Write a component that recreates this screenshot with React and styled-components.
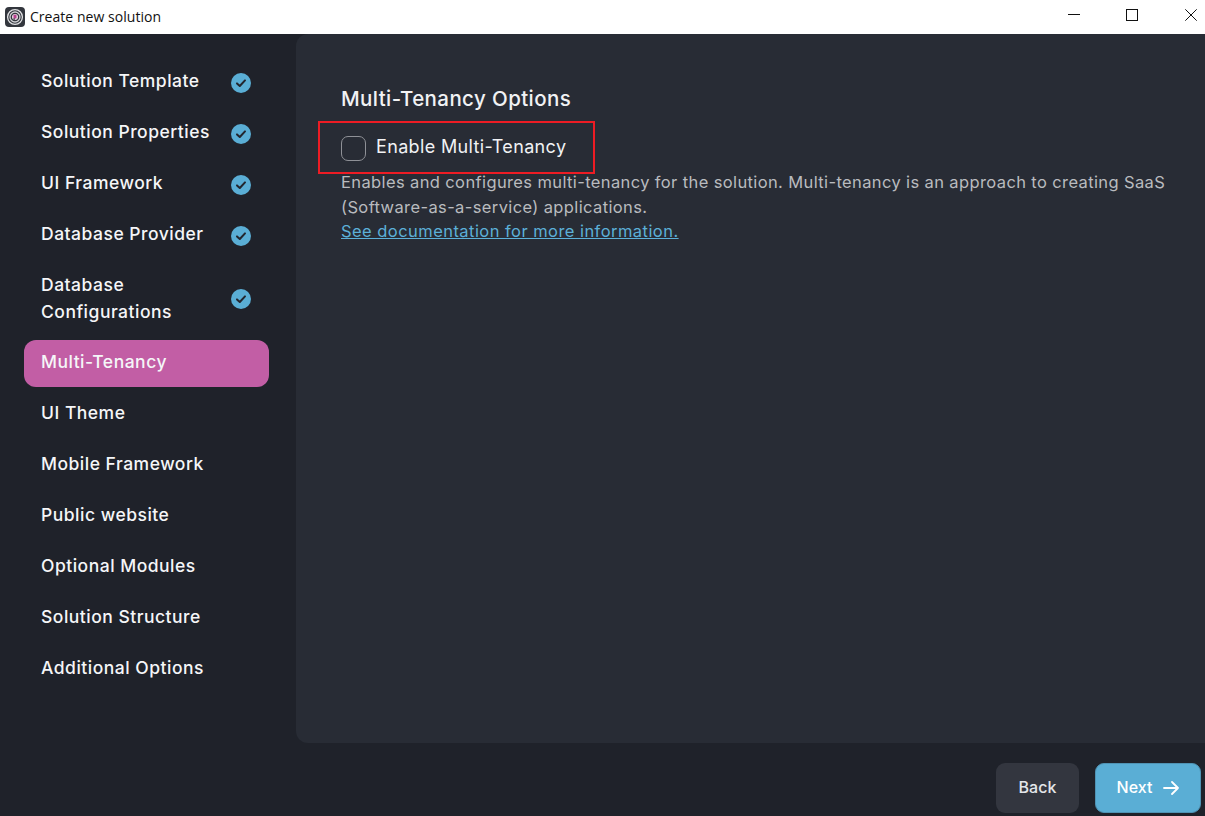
import React from "react";
import styled, { createGlobalStyle } from "styled-components";

const Global = createGlobalStyle`
  html, body { margin: 0; padding: 0; height: 100%; overflow: hidden; }
  body { background: #1f222a; font-family: "Inter", "Liberation Sans", sans-serif; }
  * { box-sizing: border-box; }
`;

const Shell = styled.div`
  width: 1205px;
  height: 816px;
  display: flex;
  flex-direction: column;
  background: #1f222a;
`;

const TitleBar = styled.header`
  height: 34px;
  flex: none;
  background: #fff;
  display: flex;
  align-items: center;
  padding: 0 8px 0 5px;
`;

const Logo = styled.svg`
  width: 20px;
  height: 20px;
  flex: none;
`;

const WindowTitle = styled.span`
  margin-left: 5px;
  font: 400 14px/20px "Open Sans", sans-serif;
  color: #111;
  letter-spacing: 0.04px;
  flex: 1;
`;

const WinButtons = styled.div`
  display: flex;
  align-items: center;
  gap: 46px;
  margin-top: -4px;
  & > :last-child {
    margin-left: 1px;
  }
`;

const WinIcon = styled.svg`
  width: 12px;
  height: 12px;
  display: block;
`;

const Body = styled.div`
  flex: 1;
  display: flex;
  min-height: 0;
`;

const Sidebar = styled.nav`
  width: 296px;
  flex: none;
  padding: 25px 27px 0 24px;
  display: flex;
  flex-direction: column;
  gap: 4px;
`;

const Step = styled.div`
  display: flex;
  align-items: center;
  justify-content: space-between;
  padding: 8px 18px 12px 17px;
  margin-bottom: ${(p) => (p.$tall ? "-2px" : "0")};
  border-radius: 12px;
  background: ${(p) => (p.$active ? "#c25ea5" : "transparent")};
  color: #f5f6f8;
  font-size: 17.5px;
  line-height: 27.1px;
  font-weight: 500;
  letter-spacing: 0.5px;
`;

const StepLabel = styled.span`
  max-width: 175px;
`;

const CheckBadge = styled.svg`
  width: 20px;
  height: 20px;
  flex: none;
  margin-top: ${(p) => (p.$tall ? "2px" : "5px")};
`;

const Main = styled.div`
  flex: 1;
  display: flex;
  flex-direction: column;
  min-width: 0;
`;

const Panel = styled.section`
  height: 709px;
  flex: none;
  background: #282c35;
  border-radius: 12px 0 0 12px;
  padding: 51px 30px 0 45px;
`;

const Heading = styled.h2`
  margin: 0;
  color: #f1f2f4;
  font-size: 20.5px;
  line-height: 28px;
  font-weight: 500;
  letter-spacing: 0.4px;
`;

const Highlight = styled.div`
  position: relative;
  display: flex;
  align-items: center;
  gap: 10px;
  height: 28px;
  margin-top: 20px;
`;

const RedFrame = styled.div`
  position: absolute;
  left: -23px;
  top: -12px;
  width: 277px;
  height: 53px;
  border: 2px solid #ed1c24;
  pointer-events: none;
`;

const CheckBox = styled.span`
  width: 25px;
  height: 25px;
  margin-top: 3px;
  border: 1.5px solid #8f9197;
  border-radius: 7px;
  flex: none;
`;

const CheckLabel = styled.span`
  color: #f1f2f4;
  font-size: 18px;
  line-height: 24px;
  letter-spacing: 0.35px;
`;

const Description = styled.p`
  margin: 9px 0 0;
  color: #b9bbbf;
  font-size: 16.5px;
  line-height: 24.5px;
  letter-spacing: 0.38px;
  width: 835px;
`;

const DocLink = styled.a`
  color: #5cb0d8;
  text-decoration: underline;
  letter-spacing: 0.45px;
  display: block;
`;

const Footer = styled.footer`
  flex: 1;
  display: flex;
  justify-content: flex-end;
  align-items: flex-start;
  gap: 16px;
  padding: 20px 4px 0 0;
`;

const BackButton = styled.button`
  width: 83px;
  height: 50px;
  padding: 0 0 3px;
  border: 0;
  border-radius: 9px;
  background: #33363f;
  color: #e4e6ea;
  font: 500 16px "Inter", sans-serif;
`;

const NextButton = styled.button`
  width: 106px;
  height: 50px;
  padding: 0 0 2px;
  border: 1px solid #4f93b4;
  border-radius: 9px;
  background: #5aaed5;
  color: #fff;
  font: 500 16px "Inter", sans-serif;
  display: flex;
  align-items: center;
  justify-content: center;
  gap: 11px;
`;

const Arrow = styled.svg`
  width: 16px;
  height: 14px;
  margin-top: 2px;
`;

const steps = [
  ["Solution Template", true],
  ["Solution Properties", true],
  ["UI Framework", true],
  ["Database Provider", true],
  ["Database Configurations", true, false, true],
  ["Multi-Tenancy", false, true],
  ["UI Theme"],
  ["Mobile Framework"],
  ["Public website"],
  ["Optional Modules"],
  ["Solution Structure"],
  ["Additional Options"],
];

export default function App() {
  return (
    <Shell>
      <Global />
      <TitleBar>
        <Logo viewBox="0 0 20 20">
          <rect width="20" height="20" rx="4" fill="#33363d" />
          <circle cx="10" cy="10" r="7.4" fill="none" stroke="#e2e2e4" strokeWidth="1.3" />
          <circle cx="10" cy="10" r="5" fill="none" stroke="#cfcfd3" strokeWidth="1.3" />
          <circle cx="10" cy="10" r="3" fill="#e8dbe5" />
          <rect x="8.5" y="7.8" width="3" height="3.6" rx="0.6" fill="#b8408f" />
          <rect x="8.5" y="11" width="1.2" height="2" fill="#4a4b52" />
        </Logo>
        <WindowTitle>Create new solution</WindowTitle>
        <WinButtons>
          <WinIcon viewBox="0 0 12 12">
            <path d="M0 5.5H12" stroke="#111" strokeWidth="1" fill="none" />
          </WinIcon>
          <WinIcon viewBox="0 0 12 12">
            <rect x="0.5" y="0.5" width="11" height="11" stroke="#111" strokeWidth="1" fill="none" />
          </WinIcon>
          <WinIcon viewBox="0 0 12 12">
            <path d="M0.3 0.3L11.7 11.7M11.7 0.3L0.3 11.7" stroke="#111" strokeWidth="1" fill="none" />
          </WinIcon>
        </WinButtons>
      </TitleBar>
      <Body>
        <Sidebar>
          {steps.map(([label, done, active, tall]) => (
            <Step key={label} $active={active} $tall={tall}>
              <StepLabel>{label}</StepLabel>
              {done && (
                <CheckBadge viewBox="0 0 20 20" $tall={tall}>
                  <circle cx="10" cy="10" r="10" fill="#5aaed5" />
                  <path d="M6 10.4L8.8 13L14 7.4" fill="none" stroke="#23262e" strokeWidth="2" strokeLinecap="round" strokeLinejoin="round" />
                </CheckBadge>
              )}
            </Step>
          ))}
        </Sidebar>
        <Main>
          <Panel>
            <Heading>Multi-Tenancy Options</Heading>
            <Highlight>
              <RedFrame />
              <CheckBox />
              <CheckLabel>Enable Multi-Tenancy</CheckLabel>
            </Highlight>
            <Description>
              Enables and configures multi-tenancy for the solution. Multi-tenancy is an approach to creating SaaS (Software-as-a-service) applications.
              <DocLink href="#">See documentation for more information.</DocLink>
            </Description>
          </Panel>
          <Footer>
            <BackButton>Back</BackButton>
            <NextButton>
              Next
              <Arrow viewBox="0 0 16 14">
                <path d="M1 7H15M9 1L15 7L9 13" fill="none" stroke="#fff" strokeWidth="1.8" strokeLinecap="round" strokeLinejoin="round" />
              </Arrow>
            </NextButton>
          </Footer>
        </Main>
      </Body>
    </Shell>
  );
}
